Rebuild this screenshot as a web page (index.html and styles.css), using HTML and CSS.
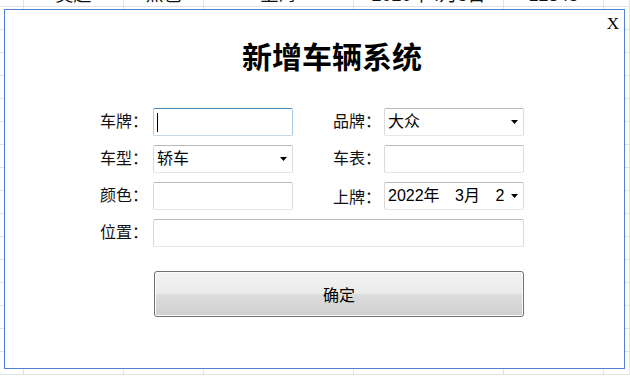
FILE: index.html
```html
<!DOCTYPE html>
<html lang="zh-CN">
<head>
<meta charset="utf-8">
<title>新增车辆系统</title>
<link rel="stylesheet" href="styles.css">
</head>
<body>
<div class="sheet">
  <div class="row top"><div class="cell c0"></div><div class="cell c1">吴超</div><div class="cell c2">黑色</div><div class="cell c3">上海</div><div class="cell c4">2020年4月5日</div><div class="cell c5">12345</div><div class="cell c6"></div></div>
  <div class="row"><div class="cell c0"></div><div class="cell c1"></div><div class="cell c2"></div><div class="cell c3"></div><div class="cell c4"></div><div class="cell c5"></div><div class="cell c6"></div></div>
  <div class="row"><div class="cell c0"></div><div class="cell c1"></div><div class="cell c2"></div><div class="cell c3"></div><div class="cell c4"></div><div class="cell c5"></div><div class="cell c6"></div></div>
  <div class="row"><div class="cell c0"></div><div class="cell c1"></div><div class="cell c2"></div><div class="cell c3"></div><div class="cell c4"></div><div class="cell c5"></div><div class="cell c6"></div></div>
  <div class="row"><div class="cell c0"></div><div class="cell c1"></div><div class="cell c2"></div><div class="cell c3"></div><div class="cell c4"></div><div class="cell c5"></div><div class="cell c6"></div></div>
  <div class="row"><div class="cell c0"></div><div class="cell c1"></div><div class="cell c2"></div><div class="cell c3"></div><div class="cell c4"></div><div class="cell c5"></div><div class="cell c6"></div></div>
  <div class="row"><div class="cell c0"></div><div class="cell c1"></div><div class="cell c2"></div><div class="cell c3"></div><div class="cell c4"></div><div class="cell c5"></div><div class="cell c6"></div></div>
  <div class="row"><div class="cell c0"></div><div class="cell c1"></div><div class="cell c2"></div><div class="cell c3"></div><div class="cell c4"></div><div class="cell c5"></div><div class="cell c6"></div></div>
  <div class="row"><div class="cell c0"></div><div class="cell c1"></div><div class="cell c2"></div><div class="cell c3"></div><div class="cell c4"></div><div class="cell c5"></div><div class="cell c6"></div></div>
  <div class="row"><div class="cell c0"></div><div class="cell c1"></div><div class="cell c2"></div><div class="cell c3"></div><div class="cell c4"></div><div class="cell c5"></div><div class="cell c6"></div></div>
  <div class="row"><div class="cell c0"></div><div class="cell c1"></div><div class="cell c2"></div><div class="cell c3"></div><div class="cell c4"></div><div class="cell c5"></div><div class="cell c6"></div></div>
  <div class="row"><div class="cell c0"></div><div class="cell c1"></div><div class="cell c2"></div><div class="cell c3"></div><div class="cell c4"></div><div class="cell c5"></div><div class="cell c6"></div></div>
  <div class="row"><div class="cell c0"></div><div class="cell c1"></div><div class="cell c2"></div><div class="cell c3"></div><div class="cell c4"></div><div class="cell c5"></div><div class="cell c6"></div></div>
  <div class="row"><div class="cell c0"></div><div class="cell c1"></div><div class="cell c2"></div><div class="cell c3"></div><div class="cell c4"></div><div class="cell c5"></div><div class="cell c6"></div></div>
  <div class="row"><div class="cell c0"></div><div class="cell c1"></div><div class="cell c2"></div><div class="cell c3"></div><div class="cell c4"></div><div class="cell c5"></div><div class="cell c6"></div></div>
  <div class="row"><div class="cell c0"></div><div class="cell c1"></div><div class="cell c2"></div><div class="cell c3"></div><div class="cell c4"></div><div class="cell c5"></div><div class="cell c6"></div></div>
  <div class="row"><div class="cell c0"></div><div class="cell c1"></div><div class="cell c2"></div><div class="cell c3"></div><div class="cell c4"></div><div class="cell c5"></div><div class="cell c6"></div></div>
</div>

<div class="dialog">
  <div class="close">X</div>
  <h1 class="title">新增车辆系统</h1>
  <div class="form">
    <div class="label">车牌：</div>
    <div class="field focus"><span class="caret"></span></div>
    <div class="spacer"></div>
    <div class="label">品牌：</div>
    <div class="field combo"><span class="val">大众</span><svg class="arrow" width="7" height="4" viewBox="0 0 7 4"><polygon points="0,0 7,0 3.5,4" fill="#000"/></svg></div>

    <div class="label">车型：</div>
    <div class="field combo"><span class="val">轿车</span><svg class="arrow" width="7" height="4" viewBox="0 0 7 4"><polygon points="0,0 7,0 3.5,4" fill="#000"/></svg></div>
    <div class="spacer"></div>
    <div class="label">车表：</div>
    <div class="field"></div>

    <div class="label">颜色：</div>
    <div class="field"></div>
    <div class="spacer"></div>
    <div class="label low">上牌：</div>
    <div class="field combo"><span class="val date">2022年 3月 2</span><svg class="arrow" width="7" height="4" viewBox="0 0 7 4"><polygon points="0,0 7,0 3.5,4" fill="#000"/></svg></div>

    <div class="label">位置：</div>
    <div class="field wide"></div>
  </div>
  <button class="ok" type="button">确定</button>
</div>
</body>
</html>
```
FILE: styles.css
```css
html, body {
  margin: 0;
  padding: 0;
  width: 630px;
  height: 376px;
  overflow: hidden;
  background: #fff;
  font-family: "Liberation Sans", "Noto Sans CJK SC", sans-serif;
  color: #000;
}

.sheet {
  margin-top: -16px;
}

.row {
  display: flex;
  height: 23px;
}

.cell {
  box-sizing: border-box;
  height: 23px;
  border-right: 1px solid #e3e3e3;
  border-bottom: 1px solid #e3e3e3;
  font-size: 18px;
  line-height: 22px;
  text-align: center;
  white-space: nowrap;
  overflow: hidden;
  color: #111;
}

.c0 { width: 24px; }
.c1 { width: 100px; }
.c2 { width: 80px; }
.c3 { width: 150px; }
.c4 { width: 150px; }
.c5 { width: 100px; }
.c6 { flex: 1; }

.dialog {
  position: absolute;
  left: 4px;
  top: 9px;
  width: 621px;
  height: 360px;
  box-sizing: border-box;
  border: 1px solid #4f81d2;
  background: #fff;
  padding: 30px 0 0 95px;
}

.close {
  position: absolute;
  right: 5px;
  top: 5px;
  font-family: "Liberation Serif", serif;
  font-size: 17px;
  line-height: 18px;
  color: #000;
}

.title {
  margin: 0 0 0 142px;
  font-family: "Noto Sans CJK SC", sans-serif;
  font-size: 30px;
  line-height: 30px;
  font-weight: 700;
  letter-spacing: 0;
}

.form {
  margin-top: 38px;
  display: grid;
  grid-template-columns: 53px 140px 40px 51px 140px;
  grid-auto-rows: 28px;
  row-gap: 9px;
}

.label {
  font-size: 16px;
  line-height: 28px;
  white-space: nowrap;
  color: #111;
}

.label.low {
  line-height: 32px;
}

.spacer {
  width: 40px;
}

.field {
  box-sizing: border-box;
  height: 28px;
  border: 1px solid;
  border-color: #b9b9b9 #dadada #e6e6e6 #dadada;
  border-radius: 2px;
  background: #fff;
  display: flex;
  align-items: center;
  padding-left: 3px;
  font-size: 16px;
}

.field.focus {
  border-color: #4a88b8 #a9cbe4 #c3dbec #a9cbe4;
}

.caret {
  display: block;
  width: 1px;
  height: 19px;
  background: #000;
}

.field.wide {
  grid-column: 2 / 6;
}

.combo {
  justify-content: space-between;
  padding-right: 5px;
}

.val {
  line-height: 26px;
  white-space: nowrap;
  overflow: hidden;
}

.val.date {
  word-spacing: 11px;
  padding-left: 0;
}

.arrow {
  flex: none;
  display: block;
}

.ok {
  display: block;
  margin: 24px 0 0 54px;
  width: 370px;
  height: 46px;
  box-sizing: border-box;
  border: 1px solid #707070;
  border-radius: 3px;
  background: linear-gradient(to bottom, #f2f2f2 0%, #ebebeb 49%, #dddddd 50%, #cfcfcf 100%);
  box-shadow: inset 0 0 0 1px #fcfcfc;
  font-family: "Liberation Sans", "Noto Sans CJK SC", sans-serif;
  font-size: 16px;
  color: #000;
  padding: 0;
}
```
